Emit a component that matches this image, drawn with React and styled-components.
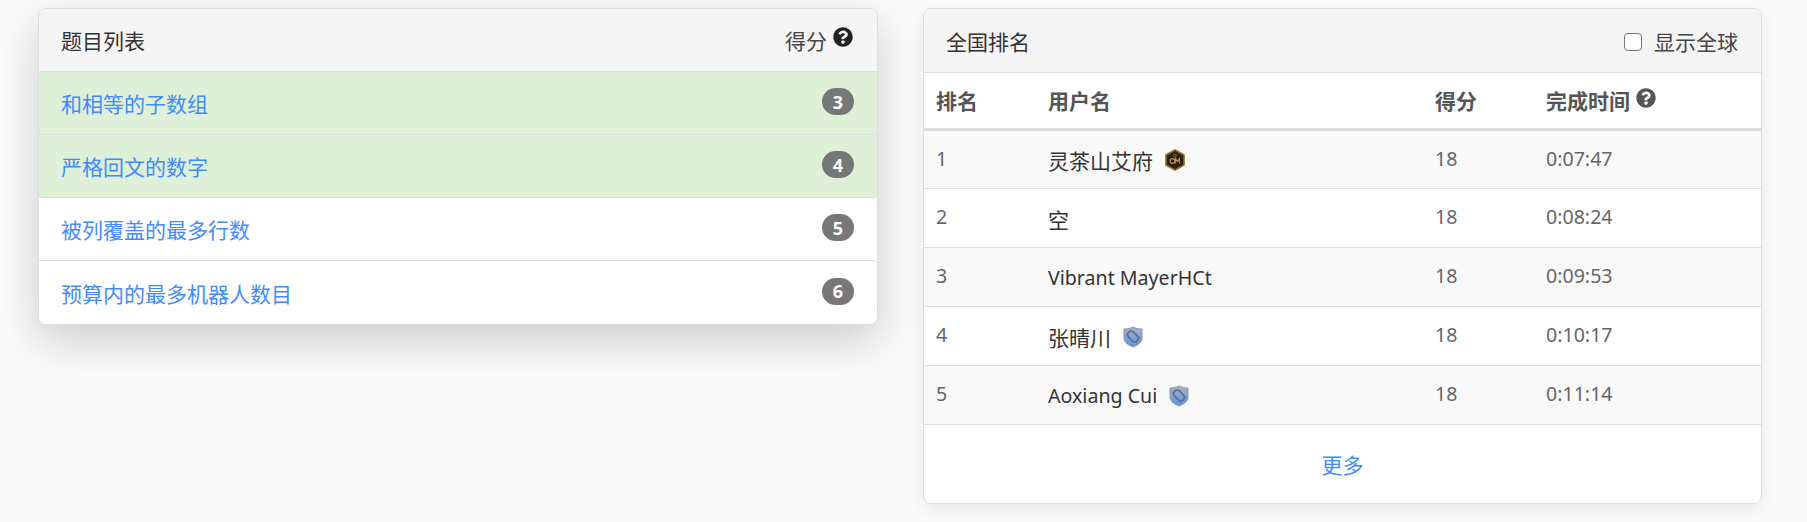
import React from "react";
import styled, { createGlobalStyle } from "styled-components";
import { FaQuestionCircle } from "react-icons/fa";

const Global = createGlobalStyle`
  html, body { margin: 0; padding: 0; background: #fafafa; }
  body {
    font-family: "Noto Sans", "Noto Sans CJK SC", sans-serif;
    font-size: 21px;
    color: #333;
  }
`;

const Page = styled.div`
  display: grid;
  grid-template-columns: 840px 839px;
  column-gap: 45px;
  align-items: start;
  padding: 8px 45px 18px 38px;
`;

const Card = styled.section`
  background: #fff;
  border: 1px solid #ddd;
  border-radius: 8px;
  overflow: hidden;
  box-shadow: ${(p) =>
    p.$raised
      ? "0 16px 44px rgba(0,0,0,.18)"
      : "0 6px 20px rgba(0,0,0,.07)"};
`;

const CardHeader = styled.header`
  display: flex;
  align-items: center;
  justify-content: space-between;
  height: ${(p) => p.$h}px;
  box-sizing: border-box;
  padding: 2px ${(p) => p.$pr}px 0 ${(p) => p.$pl}px;
  background: #f5f5f5;
  border-bottom: 1px solid #ddd;
  color: #333;
  line-height: 30px;
`;

const ScoreHead = styled.span`
  display: inline-flex;
  align-items: flex-start;
  gap: 6px;
  color: #444;
  svg { margin-top: 1px; color: #222; font-size: 20px; }
`;

const ProblemRow = styled.div`
  display: flex;
  align-items: center;
  justify-content: space-between;
  height: 63px;
  box-sizing: border-box;
  padding: 0 23px 0 22px;
  background: ${(p) => (p.$done ? "#dff0d8" : "#fff")};
  border-bottom: 1px solid #ddd;
  &:last-child { border-bottom: 0; }
`;

const ProblemLink = styled.a`
  color: #428bff;
  text-decoration: none;
`;

const Badge = styled.span`
  display: inline-flex;
  align-items: center;
  justify-content: center;
  width: 32px;
  height: 27px;
  margin-top: -3px;
  border-radius: 14px;
  background: #777;
  color: #fff;
  font-size: 18px;
  font-weight: 700;
`;

const GlobalToggle = styled.label`
  display: inline-flex;
  align-items: center;
  gap: 12px;
  color: #444;
`;

const Check = styled.span`
  width: 18px;
  height: 18px;
  box-sizing: border-box;
  border: 1.5px solid #767676;
  border-radius: 4px;
  background: #fff;
`;

const Table = styled.table`
  width: 100%;
  table-layout: fixed;
  border-collapse: collapse;
`;

const Th = styled.th`
  width: ${(p) => p.$w}px;
  height: 56px;
  padding: 0 0 0 12px;
  text-align: left;
  font-weight: 700;
  color: #555;
  border-bottom: 3px solid #ddd;
  box-sizing: border-box;
  svg { margin-left: 6px; font-size: 20px; vertical-align: 1px; color: #555; }
`;

const Tr = styled.tr`
  background: ${(p) => (p.$odd ? "#f9f9f9" : "#fff")};
  border-bottom: 1px solid #ddd;
`;

const Td = styled.td`
  height: 59px;
  padding: 0 0 2px 12px;
  box-sizing: border-box;
  color: #666;
  font-size: 19.6px;
`;

const UserCell = styled.td`
  height: 59px;
  padding: 2px 0 0 12px;
  box-sizing: border-box;
  color: #333;
  font-size: ${(p) => (p.$cjk ? "21px" : "19.6px")};
`;

const NameLine = styled.span`
  display: inline-flex;
  align-items: center;
  gap: 12px;
  svg { flex: none; }
`;

const CardFooter = styled.footer`
  display: flex;
  align-items: center;
  justify-content: center;
  height: 78px;
`;

const MoreLink = styled.a`
  color: #428bff;
  text-decoration: none;
`;

const GuardianBadge = () => (
  <svg width="20" height="22" viewBox="0 0 20 22">
    <polygon points="10,1 19,6 19,16 10,21 1,16 1,6" fill="#2b2116" stroke="#8f6a30" strokeWidth="1.6" />
    <circle cx="7.5" cy="12" r="2.4" fill="none" stroke="#b68d50" strokeWidth="1.2" />
    <path d="M10.5 14.5V9.5l2 3 2-3v5" fill="none" stroke="#b68d50" strokeWidth="1.1" />
    <circle cx="10" cy="6.5" r="1.4" fill="none" stroke="#8f6a30" strokeWidth="1" />
  </svg>
);

const KnightBadge = () => (
  <svg width="20" height="22" viewBox="0 0 20 22">
    <defs>
      <linearGradient id="shieldFill" x1="0" y1="0" x2="0" y2="1">
        <stop offset="0" stopColor="#a9b3c4" />
        <stop offset="1" stopColor="#5b93e4" />
      </linearGradient>
    </defs>
    <path d="M10 1 C13 2.5 16 3 19 3 V12 C19 16.5 14 19.5 10 21 C6 19.5 1 16.5 1 12 V3 C4 3 7 2.5 10 1Z" fill="url(#shieldFill)" stroke="#8b93a3" strokeWidth="1" />
    <rect x="4" y="7" width="12" height="7" rx="3" transform="rotate(45 10 10.5)" fill="none" stroke="#5e6f8d" strokeWidth="1.7" />
  </svg>
);

const problems = [
  { name: "和相等的子数组", score: 3, done: true },
  { name: "严格回文的数字", score: 4, done: true },
  { name: "被列覆盖的最多行数", score: 5 },
  { name: "预算内的最多机器人数目", score: 6 },
];

const ranks = [
  { rank: 1, name: "灵茶山艾府", cjk: true, badge: <GuardianBadge />, time: "0:07:47" },
  { rank: 2, name: "空", cjk: true, time: "0:08:24" },
  { rank: 3, name: "Vibrant MayerHCt", time: "0:09:53" },
  { rank: 4, name: "张晴川", cjk: true, badge: <KnightBadge />, time: "0:10:17" },
  { rank: 5, name: "Aoxiang Cui", badge: <KnightBadge />, time: "0:11:14" },
];

export default function App() {
  return (
    <>
      <Global />
      <Page>
        <Card $raised>
          <CardHeader $h={63} $pl={22} $pr={24}>
            <span>题目列表</span>
            <ScoreHead>得分<FaQuestionCircle /></ScoreHead>
          </CardHeader>
          {problems.map((p) => (
            <ProblemRow key={p.score} $done={p.done}>
              <ProblemLink href="#">{p.name}</ProblemLink>
              <Badge>{p.score}</Badge>
            </ProblemRow>
          ))}
        </Card>
        <Card>
          <CardHeader $h={64} $pl={22} $pr={23}>
            <span>全国排名</span>
            <GlobalToggle><Check />显示全球</GlobalToggle>
          </CardHeader>
          <Table>
            <thead>
              <tr>
                <Th $w={112}>排名</Th>
                <Th $w={387}>用户名</Th>
                <Th $w={111}>得分</Th>
                <Th>完成时间<FaQuestionCircle /></Th>
              </tr>
            </thead>
            <tbody>
              {ranks.map((r) => (
                <Tr key={r.rank} $odd={r.rank % 2 === 1}>
                  <Td>{r.rank}</Td>
                  <UserCell $cjk={r.cjk}>
                    <NameLine>{r.name}{r.badge}</NameLine>
                  </UserCell>
                  <Td>18</Td>
                  <Td>{r.time}</Td>
                </Tr>
              ))}
            </tbody>
          </Table>
          <CardFooter><MoreLink href="#">更多</MoreLink></CardFooter>
        </Card>
      </Page>
    </>
  );
}
